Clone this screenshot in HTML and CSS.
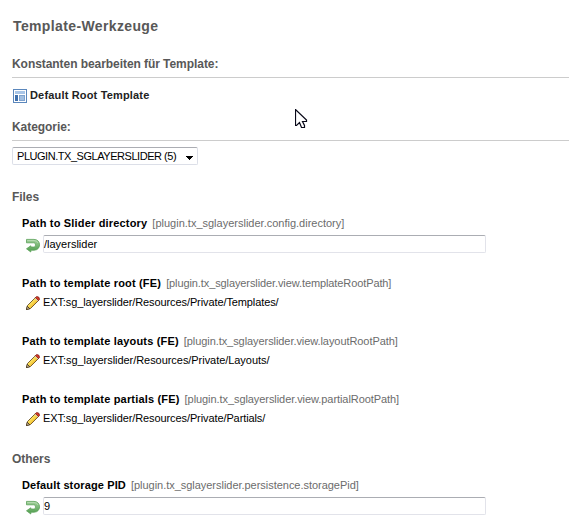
FILE: index.html
```html
<!DOCTYPE html>
<html lang="de">
<head>
<meta charset="utf-8">
<title>Template-Werkzeuge</title>
<link rel="stylesheet" href="styles.css">
</head>
<body>
<svg class="defs" width="0" height="0">
  <defs>
    <linearGradient id="green" x1="0" y1="0" x2="0" y2="1"><stop offset="0" stop-color="#a3d09c"/><stop offset="1" stop-color="#4c9c4b"/></linearGradient>
    <linearGradient id="yellow" x1="0" y1="0" x2="1" y2="1"><stop offset="0.3" stop-color="#fff27a"/><stop offset="0.7" stop-color="#f0b51c"/></linearGradient>
    <symbol id="undo" viewBox="0 0 16 16">
      <path d="M1.5 2.4H9C16.4 2.4 16.4 13.2 9 13.2H5.8V15L1.5 11.8L5.8 8.8V10H8.8C11 10 11 5.8 8.8 5.8H1.5Z" fill="url(#green)" stroke="#5aa158" stroke-width=".8"/>
      <path d="M2.3 3.5H9Q12 3.5 13 6" fill="none" stroke="#bfe0ba" stroke-width=".7"/>
    </symbol>
    <symbol id="pencil" viewBox="0 0 16 16">
      <path d="M1.5 14.5L2.5 10.5L10.5 2.5L13.5 5.5L5.5 13.5Z" fill="url(#yellow)" stroke="#5a3c12" stroke-width=".8"/>
      <path d="M10.3 2.7L11.7 1.5Q14.5 1.5 14.5 4.3L13.3 5.7Z" fill="#d83a28" stroke="#7c201a" stroke-width=".8"/>
      <path d="M10 3.2L12.8 6" stroke="#d8d8d0"/>
      <path d="M1.5 14.5L2.3 11.3L4.7 13.7Z" fill="#f5dcae" stroke="#2b2013" stroke-width=".8"/>
    </symbol>
  </defs>
</svg>
<main>
  <h1>Template-Werkzeuge</h1>
  <h2>Konstanten bearbeiten für Template:</h2>
  <div class="record">
    <svg width="14" height="14" viewBox="0 0 14 14">
      <rect x=".5" y=".5" width="13" height="13" fill="#fff" stroke="#5b87bc"/>
      <rect x="2" y="2" width="10" height="3" fill="#a9c6e8"/>
      <rect x="2" y="6" width="3" height="6" fill="#3f70ad"/>
      <rect x="6.5" y="6.5" width="5" height="5" fill="#a2bfe1" stroke="#7fa3cf"/>
    </svg>
    <b>Default Root Template</b>
  </div>
  <h2 class="category">Kategorie:</h2>
  <div class="select"><span>PLUGIN.TX_SGLAYERSLIDER (5)</span>
    <svg width="7" height="4" viewBox="0 0 7 4" shape-rendering="crispEdges"><path d="M0 0H7V1H6V2H5V3H4V4H3V3H2V2H1V1H0Z"/></svg>
  </div>

  <h3>Files</h3>
  <div class="constant">
    <div class="label"><b>Path to Slider directory</b><span class="key-wide">[plugin.tx_sglayerslider.config.directory]</span></div>
    <div class="field"><svg width="16" height="16"><use href="#undo"/></svg><div class="input">/layerslider</div></div>
  </div>
  <div class="constant after-input">
    <div class="label"><b>Path to template root (FE)</b><span class="key-narrow">[plugin.tx_sglayerslider.view.templateRootPath]</span></div>
    <div class="value"><svg width="16" height="16"><use href="#pencil"/></svg><span>EXT:sg_layerslider/Resources/Private/Templates/</span></div>
  </div>
  <div class="constant after-value">
    <div class="label"><b>Path to template layouts (FE)</b><span>[plugin.tx_sglayerslider.view.layoutRootPath]</span></div>
    <div class="value value-wide"><svg width="16" height="16"><use href="#pencil"/></svg><span>EXT:sg_layerslider/Resources/Private/Layouts/</span></div>
  </div>
  <div class="constant after-value">
    <div class="label"><b>Path to template partials (FE)</b><span>[plugin.tx_sglayerslider.view.partialRootPath]</span></div>
    <div class="value"><svg width="16" height="16"><use href="#pencil"/></svg><span>EXT:sg_layerslider/Resources/Private/Partials/</span></div>
  </div>

  <h3 class="others">Others</h3>
  <div class="constant">
    <div class="label"><b class="name-tight">Default storage PID</b><span class="key-medium">[plugin.tx_sglayerslider.persistence.storagePid]</span></div>
    <div class="field"><svg width="16" height="16"><use href="#undo"/></svg><div class="input">9</div></div>
  </div>
</main>
<svg class="cursor" width="13" height="20" viewBox="0 0 13 20"><path d="M.5 .5V16.5H1.5L4.5 13.5L6.5 18.5H9.5V16.5L7.5 12.5H11.5V11Z" fill="#fff" stroke="#080818" stroke-width="1.2"/></svg>
</body>
</html>
```
FILE: styles.css
```css
* { box-sizing: border-box; }
body {
  margin: 0;
  background: #fff;
  color: #000;
  font: 11px/16px "Liberation Sans", Arial, sans-serif;
  overflow: hidden;
}
svg { display: block; flex: none; }
.defs { position: absolute; }
main { padding: 16px 0 0 12px; white-space: nowrap; }
h1, h2, h3 { margin: 0; color: #585858; font-weight: bold; }
h1 { font-size: 14px; line-height: 20px; padding-left: 1px; letter-spacing: .37px; }
h2 { font-size: 12px; line-height: 16px; margin-top: 20px; padding-bottom: 5px; border-bottom: 1px solid #ccc; letter-spacing: -.06px; }
h3 { font-size: 12px; line-height: 16px; margin-top: 24px; letter-spacing: -.06px; }
.record { display: flex; gap: 3px; height: 16px; margin-top: 9px; padding-left: 1px; color: #222; letter-spacing: .17px; }
.record svg { margin-top: 2px; }
.category { margin-top: 16px; }
.select {
  display: flex;
  align-items: center;
  justify-content: space-between;
  width: 186px;
  height: 18px;
  margin-top: 6px;
  padding: 0 4px;
  border: 1px solid #dcdfe8;
  border-top-color: #abadb3;
  border-radius: 2px;
  letter-spacing: -.46px;
}
.select svg { margin-top: 3px; }
.constant { margin: 10px 0 0 10px; }
.after-input { margin-top: 22px; }
.after-value { margin-top: 23px; }
.label { display: flex; gap: 5px; height: 16px; }
.label b { letter-spacing: .18px; }
.label .name-tight { letter-spacing: .13px; }
.label span { color: #6c6c6c; letter-spacing: -.07px; }
.label .key-wide { letter-spacing: 0; }
.label .key-medium { letter-spacing: -.03px; }
.label .key-narrow { letter-spacing: -.1px; }
.field { display: flex; height: 18px; margin: 4px 0 0 3px; gap: 2px; }
.field svg { margin-top: 2px; }
.input {
  width: 443px;
  border: 1px solid #e2e3ea;
  border-top-color: #abadb3;
  border-radius: 2px;
}
.value { display: flex; height: 16px; margin: 3px 0 0 3px; gap: 2px; letter-spacing: -.1px; }
.value-wide { letter-spacing: -.05px; }
.value svg { margin-top: 1px; }
.others { margin-top: 25px; }
.cursor { position: absolute; left: 295px; top: 109px; }
```
